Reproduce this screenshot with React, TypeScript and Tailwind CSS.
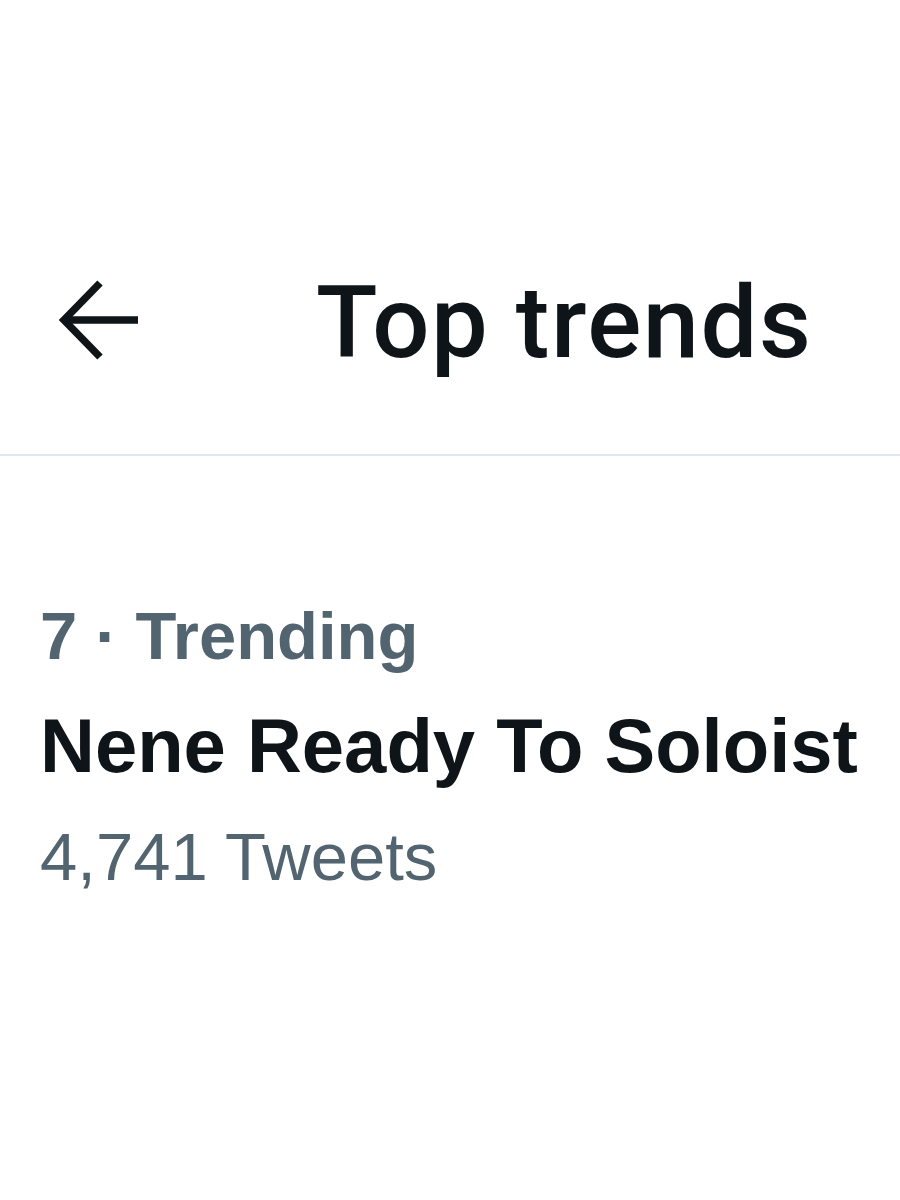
import React from "react";

export default function App() {
  return (
    <div className="w-[900px] h-[1200px] bg-white overflow-hidden" style={{ fontFamily: '"Liberation Sans", Arial, sans-serif' }}>
      <div className="h-[456px] border-b-2 border-[#e1e8ed] flex items-start pt-[262px]">
        <div className="flex items-center h-[116px]">
          <div className="w-[316px] pl-[58px] flex items-center">
            <svg width="82" height="80" viewBox="0 0 82 80" fill="none" stroke="#0f1419" strokeWidth="7.5" strokeLinecap="butt" strokeLinejoin="miter">
              <path d="M42 3 L6 40 L42 77" />
              <path d="M6 40 L80 40" />
            </svg>
          </div>
          <div className="text-[101px] leading-none font-medium text-[#0f1419] tracking-[1.5px] mt-[4px]" style={{ fontFamily: 'Roboto, "Liberation Sans", sans-serif' }}>
            Top trends
          </div>
        </div>
      </div>
      <div className="pl-[40px] pt-[140px]">
        <div className="text-[67px] leading-[80px] font-bold text-[#536471]">7<span className="mx-[18px]">·</span>Trending</div>
        <div className="text-[76px] leading-[100px] font-bold text-[#0f1419] mt-[20px]">Nene Ready To Soloist</div>
        <div className="text-[67px] leading-[90px] text-[#536471] mt-[16px]">4,741 Tweets</div>
      </div>
    </div>
  );
}
